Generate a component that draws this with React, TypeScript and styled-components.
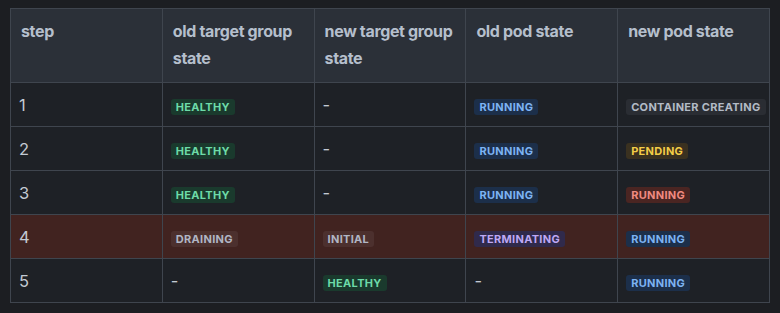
import { createGlobalStyle, styled } from 'styled-components';

const GlobalStyle = createGlobalStyle`
  html, body {
    margin: 0;
    padding: 0;
    background: #1c1e22;
  }

  body {
    font-family: Inter, 'Noto Sans', sans-serif;
  }
`;

const tones = {
  green: { fg: '#6ddba8', bg: '#1a3a2d' },
  blue: { fg: '#7db3f3', bg: '#1c2f4a' },
  gray: { fg: '#b3bbc6', bg: '#2a2d33' },
  yellow: { fg: '#f3cd47', bg: '#3a3120' },
  red: { fg: '#f08a80', bg: '#4a2522' },
  purple: { fg: '#bea8f4', bg: '#302a4b' },
  muted: { fg: '#b1b6c4', bg: '#4c302e' },
};

type Tone = keyof typeof tones;

type Cell = { label: string; tone: Tone } | null;

type Row = { step: number; alert?: boolean; cells: Cell[] };

const rows: Row[] = [
  {
    step: 1,
    cells: [
      { label: 'HEALTHY', tone: 'green' },
      null,
      { label: 'RUNNING', tone: 'blue' },
      { label: 'CONTAINER CREATING', tone: 'gray' },
    ],
  },
  {
    step: 2,
    cells: [
      { label: 'HEALTHY', tone: 'green' },
      null,
      { label: 'RUNNING', tone: 'blue' },
      { label: 'PENDING', tone: 'yellow' },
    ],
  },
  {
    step: 3,
    cells: [
      { label: 'HEALTHY', tone: 'green' },
      null,
      { label: 'RUNNING', tone: 'blue' },
      { label: 'RUNNING', tone: 'red' },
    ],
  },
  {
    step: 4,
    alert: true,
    cells: [
      { label: 'DRAINING', tone: 'muted' },
      { label: 'INITIAL', tone: 'muted' },
      { label: 'TERMINATING', tone: 'purple' },
      { label: 'RUNNING', tone: 'blue' },
    ],
  },
  {
    step: 5,
    cells: [null, { label: 'HEALTHY', tone: 'green' }, null, { label: 'RUNNING', tone: 'blue' }],
  },
];

const headers = ['step', 'old target group state', 'new target group state', 'old pod state', 'new pod state'];

const SPage = styled.div`
  padding: 8px 10px;
`;

const STable = styled.table`
  width: 760px;
  border-collapse: collapse;
  table-layout: fixed;
  border: 1px solid #3f454e;
`;

const SHeadCell = styled.th`
  box-sizing: border-box;
  height: 74px;
  padding: 9px 8px 9px 10px;
  background: #2b3038;
  color: #b5bfcc;
  font-size: 16px;
  font-weight: 700;
  letter-spacing: -0.35px;
  line-height: 27px;
  text-align: left;
  vertical-align: top;
  border: 1px solid #3f454e;
`;

const SRow = styled.tr<{ $alert?: boolean }>`
  background: ${({ $alert }) => ($alert ? '#412320' : '#1e2126')};
`;

const SCell = styled.td`
  box-sizing: border-box;
  height: 44px;
  padding: 0 6px 0 8px;
  color: #c3cad3;
  font-size: 16.5px;
  line-height: 24px;
  vertical-align: middle;
  border: 1px solid #3f454e;
  white-space: nowrap;
`;

const SBadge = styled.span<{ $tone: Tone }>`
  display: inline-block;
  padding: 1px 5px;
  border-radius: 3px;
  font-size: 11px;
  font-weight: 700;
  letter-spacing: 0.3px;
  line-height: 14px;
  color: ${({ $tone }) => tones[$tone].fg};
  background: ${({ $tone }) => tones[$tone].bg};
`;

const App = () => (
  <SPage>
    <GlobalStyle />
    <STable>
      <thead>
        <tr>
          {headers.map((h) => (
            <SHeadCell key={h}>{h}</SHeadCell>
          ))}
        </tr>
      </thead>
      <tbody>
        {rows.map((row) => (
          <SRow key={row.step} $alert={row.alert}>
            <SCell>{row.step}</SCell>
            {row.cells.map((cell, i) => (
              <SCell key={i}>{cell ? <SBadge $tone={cell.tone}>{cell.label}</SBadge> : '-'}</SCell>
            ))}
          </SRow>
        ))}
      </tbody>
    </STable>
  </SPage>
);

export default App;
